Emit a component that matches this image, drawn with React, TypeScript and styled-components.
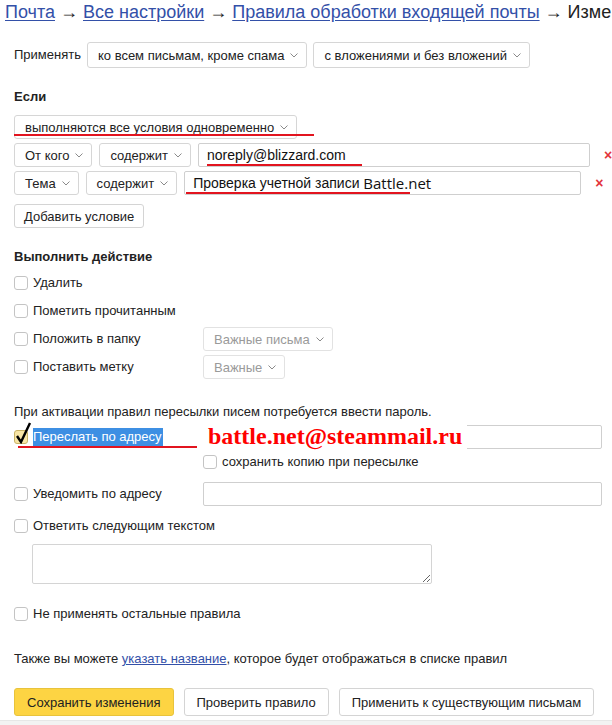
import React from "react";
import styled, { createGlobalStyle } from "styled-components";

const GlobalStyle = createGlobalStyle`
  html, body { margin: 0; padding: 0; background: #fff; }
  body {
    font-family: "Liberation Sans", Arial, sans-serif;
    font-size: 13px;
    color: #222;
  }
`;

const Page = styled.div`
  width: 612px;
  height: 725px;
  overflow: hidden;
  position: relative;
  display: flex;
  flex-direction: column;
`;

const Breadcrumb = styled.div`
  padding-left: 5px;
  height: 24px;
  line-height: 24px;
  font-size: 18px;
  white-space: nowrap;
  color: #222;
`;

const Crumb = styled.a`
  color: #3350a8;
  text-decoration: underline;
  text-underline-offset: 2px;
`;

const Content = styled.div`
  padding-left: 14px;
  display: flex;
  flex-direction: column;
`;

const Row = styled.div<{ $mt?: number; $h?: number; $gap?: number }>`
  display: flex;
  align-items: center;
  gap: ${(p) => p.$gap ?? 7}px;
  margin-top: ${(p) => p.$mt ?? 0}px;
  height: ${(p) => (p.$h ? `${p.$h}px` : "auto")};
  position: relative;
`;

const Label = styled.span<{ $size?: number }>`
  line-height: 16px;
  white-space: nowrap;
  font-size: ${(p) => p.$size ?? 13}px;
`;

const SelectBox = styled.div<{ $h?: number; $disabled?: boolean }>`
  box-sizing: border-box;
  height: ${(p) => p.$h ?? 24}px;
  display: inline-flex;
  align-items: center;
  gap: 6px;
  padding: 0 8px 0 10px;
  border: 1px solid ${(p) => (p.$disabled ? "#e2e2e2" : "#d6d6d6")};
  border-radius: 3px;
  background: #fff;
  color: ${(p) => (p.$disabled ? "#9a9a9a" : "#222")};
  white-space: nowrap;
  flex: none;
`;

const Chevron = () => (
  <svg width="8" height="5" viewBox="0 0 8 5" fill="none">
    <polyline points="0.5,0.5 4,4 7.5,0.5" stroke="#8a8a8a" strokeWidth="1" />
  </svg>
);

const Select = ({ children, h, disabled }: { children: React.ReactNode; h?: number; disabled?: boolean }) => (
  <SelectBox $h={h} $disabled={disabled}>
    <span>{children}</span>
    <Chevron />
  </SelectBox>
);

const SectionTitle = styled.div<{ $mt: number }>`
  font-weight: bold;
  line-height: 16px;
  margin-top: ${(p) => p.$mt}px;
`;

const TextField = styled.div<{ $w: number; $h?: number }>`
  box-sizing: border-box;
  width: ${(p) => p.$w}px;
  height: ${(p) => p.$h ?? 24}px;
  border: 1px solid #cfcfcf;
  border-radius: 2px;
  display: flex;
  align-items: center;
  padding-left: 8px;
  font-size: 14px;
  color: #111;
  background: #fff;
  white-space: nowrap;
  flex: none;
`;

const AltFont = styled.span`
  font-family: "Open Sans", "Noto Sans", sans-serif;
  font-size: 15px;
`;

const RemoveX = styled.span`
  color: #e3343a;
  font-weight: bold;
  font-size: 14px;
  margin-left: 7px;
  flex: none;
`;

const RedLine = styled.div<{ $left: number; $width: number; $top: number }>`
  position: absolute;
  left: ${(p) => p.$left}px;
  top: ${(p) => p.$top}px;
  width: ${(p) => p.$width}px;
  height: 2px;
  background: #e2141f;
  pointer-events: none;
`;

const Button = styled.div<{ $primary?: boolean; $h?: number; $px?: number }>`
  box-sizing: border-box;
  height: ${(p) => p.$h ?? 28}px;
  display: inline-flex;
  align-items: center;
  padding: 0 ${(p) => p.$px ?? 12}px;
  border: 1px solid ${(p) => (p.$primary ? "#e8c33c" : "#d4d4d4")};
  border-radius: 3px;
  background: ${(p) => (p.$primary ? "#fdd443" : "#fff")};
  color: #222;
  font-size: 13px;
  white-space: nowrap;
  flex: none;
`;

const ActionRow = styled.div<{ $mt?: number; $h?: number; $indent?: number }>`
  display: grid;
  grid-template-columns: 189px 1fr;
  align-items: center;
  height: ${(p) => p.$h ?? 28}px;
  margin-top: ${(p) => p.$mt ?? 0}px;
  padding-left: ${(p) => p.$indent ?? 0}px;
  position: relative;
`;

const CheckLabel = styled.div`
  display: flex;
  align-items: center;
  gap: 5px;
  position: relative;
  grid-column: 1;
`;

const Box = styled.span<{ $checked?: boolean }>`
  box-sizing: border-box;
  width: 14px;
  height: 14px;
  border: 1px solid ${(p) => (p.$checked ? "#c8b266" : "#c4c4c4")};
  border-radius: 3px;
  background: ${(p) => (p.$checked ? "#f8e6a6" : "#fff")};
  position: relative;
  flex: none;
`;

const CheckMark = styled.svg`
  position: absolute;
  left: 1px;
  top: -9px;
`;

const Selected = styled.span`
  background: #3d8fe3;
  color: #fff;
  line-height: 18px;
  padding-right: 1px;
  white-space: nowrap;
`;

const Checkbox = ({ checked }: { checked?: boolean }) => (
  <Box $checked={checked}>
    {checked && (
      <CheckMark width="16" height="22" viewBox="0 0 16 22">
        <path d="M1 14 L5 20 L14 1" stroke="#000" strokeWidth="2.4" fill="none" strokeLinejoin="miter" />
      </CheckMark>
    )}
  </Box>
);

const InputCell = styled.div`
  position: relative;
  display: flex;
  grid-column: 2;
`;

const Overlay = styled.div`
  position: absolute;
  left: 0;
  top: -4px;
  width: 264px;
  height: 32px;
  background: #fff;
  color: #ff0000;
  font-family: "Liberation Serif", "Times New Roman", serif;
  font-weight: bold;
  font-size: 24px;
  line-height: 30px;
  padding-left: 5px;
  box-sizing: border-box;
  white-space: nowrap;
`;

const TextArea = styled.textarea`
  box-sizing: border-box;
  width: 400px;
  height: 40px;
  margin-left: 18px;
  margin-top: 4px;
  border: 1px solid #d4d4d4;
  border-radius: 2px;
  resize: both;
  font-family: inherit;
  outline: none;
  display: block;
`;

const Note = styled.div<{ $mt: number }>`
  margin-top: ${(p) => p.$mt}px;
  line-height: 16px;
  white-space: nowrap;
`;

const InlineLink = styled.a`
  color: #3350a8;
  text-decoration: underline;
`;

const FooterBand = styled.div`
  margin-top: auto;
  height: 4px;
  background: #f2f2f2;
  border-top: 1px solid #e6e6e6;
`;

export default function App() {
  return (
    <>
      <GlobalStyle />
      <Page>
        <Breadcrumb>
          <Crumb>Почта</Crumb> → <Crumb>Все настройки</Crumb> → <Crumb>Правила обработки входящей почты</Crumb> → Изменить правило
        </Breadcrumb>
        <Content>
          <Row $mt={18} $h={26} $gap={6}>
            <Label>Применять</Label>
            <Select h={26}>ко всем письмам, кроме спама</Select>
            <Select h={26}>с вложениями и без вложений</Select>
          </Row>

          <SectionTitle $mt={21}>Если</SectionTitle>

          <Row $mt={10} $h={24}>
            <Select>выполняются все условия одновременно</Select>
            <RedLine $left={0} $width={300} $top={19} />
          </Row>
          <Row $mt={4} $h={24}>
            <Select>От кого</Select>
            <Select>содержит</Select>
            <TextField $w={392}>noreply@blizzard.com</TextField>
            <RemoveX>×</RemoveX>
            <RedLine $left={193} $width={155} $top={21} />
          </Row>
          <Row $mt={4} $h={24}>
            <Select>Тема</Select>
            <Select>содержит</Select>
            <TextField $w={397}>
              Проверка учетной записи&nbsp;<AltFont>Battle.net</AltFont>
            </TextField>
            <RemoveX>×</RemoveX>
            <RedLine $left={172} $width={224} $top={21} />
          </Row>
          <Row $mt={9} $h={24}>
            <Button $h={24} $px={9}>Добавить условие</Button>
          </Row>

          <SectionTitle $mt={21}>Выполнить действие</SectionTitle>

          <ActionRow $mt={4}>
            <CheckLabel><Checkbox /><Label>Удалить</Label></CheckLabel>
          </ActionRow>
          <ActionRow>
            <CheckLabel><Checkbox /><Label>Пометить прочитанным</Label></CheckLabel>
          </ActionRow>
          <ActionRow>
            <CheckLabel><Checkbox /><Label>Положить в папку</Label></CheckLabel>
            <div><Select disabled>Важные письма</Select></div>
          </ActionRow>
          <ActionRow>
            <CheckLabel><Checkbox /><Label>Поставить метку</Label></CheckLabel>
            <div><Select disabled>Важные</Select></div>
          </ActionRow>

          <Note $mt={23}>При активации правил пересылки писем потребуется ввести пароль.</Note>

          <ActionRow $mt={3}>
            <CheckLabel>
              <Checkbox checked />
              <Selected>Переслать по адресу</Selected>
            </CheckLabel>
            <InputCell>
              <TextField $w={399} />
              <Overlay>battle.net@steammail.ru</Overlay>
            </InputCell>
            <RedLine $left={4} $width={179} $top={23} />
          </ActionRow>
          <ActionRow $h={22} $indent={189}>
            <CheckLabel><Checkbox /><Label>сохранить копию при пересылке</Label></CheckLabel>
          </ActionRow>
          <ActionRow $mt={7}>
            <CheckLabel><Checkbox /><Label>Уведомить по адресу</Label></CheckLabel>
            <InputCell><TextField $w={399} /></InputCell>
          </ActionRow>
          <ActionRow $mt={4}>
            <CheckLabel><Checkbox /><Label>Ответить следующим текстом</Label></CheckLabel>
          </ActionRow>
          <TextArea />
          <ActionRow $mt={16}>
            <CheckLabel><Checkbox /><Label>Не применять остальные правила</Label></CheckLabel>
          </ActionRow>

          <Note $mt={23}>
            Также вы можете <InlineLink>указать название</InlineLink>, которое будет отображаться в списке правил
          </Note>

          <Row $mt={21} $h={28} $gap={10}>
            <Button $primary>Сохранить изменения</Button>
            <Button>Проверить правило</Button>
            <Button>Применить к существующим письмам</Button>
          </Row>
        </Content>
        <FooterBand />
      </Page>
    </>
  );
}
